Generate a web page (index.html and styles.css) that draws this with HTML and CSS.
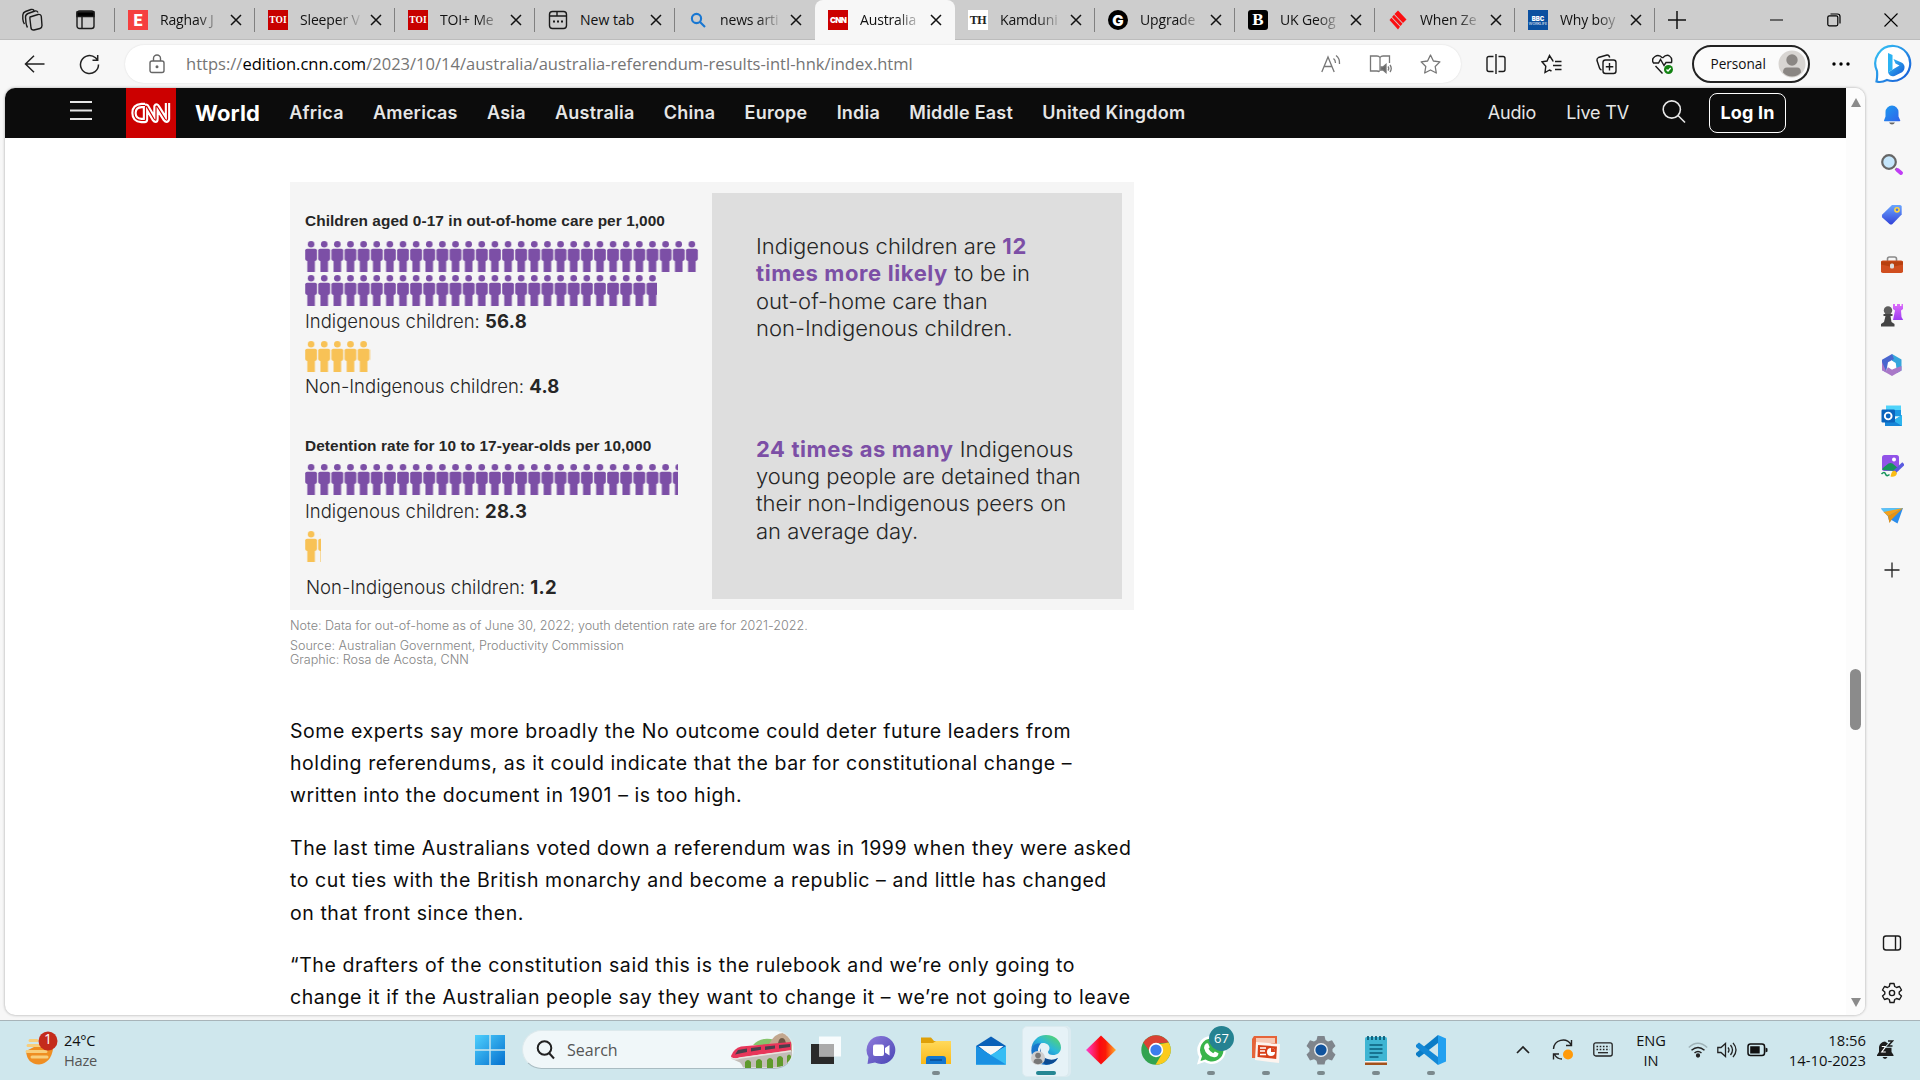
FILE: index.html
```html
<!DOCTYPE html>
<html lang="en">
<head>
<meta charset="utf-8">
<title>Australia referendum results</title>
<link rel="stylesheet" href="styles.css">
</head>
<body>
<svg class="defs" width="0" height="0">
  <defs>
    <g id="person"><circle cx="6.1" cy="3.3" r="3.3"/><rect x=".2" y="7.7" width="11.8" height="12.2" rx="1.8"/><path d="M2.3 18h7.6v13H2.3z"/></g>
    <pattern id="people-purple" width="13.13" height="31" patternUnits="userSpaceOnUse"><use href="#person" fill="#7c4fa6"/></pattern>
    <pattern id="people-yellow" width="13.13" height="31" patternUnits="userSpaceOnUse"><use href="#person" fill="#f8c256"/></pattern>
    <symbol id="x" viewBox="0 0 12 12"><path d="M1 1l10 10M11 1L1 11" stroke="#111" stroke-width="1.5" fill="none"/></symbol>
    <linearGradient id="g-blue" x1="0" y1="0" x2="1" y2="1"><stop offset="0" stop-color="#37c6f5"/><stop offset="1" stop-color="#1557d6"/></linearGradient>
    <linearGradient id="g-win" x1="0" y1="0" x2="1" y2="1"><stop offset="0" stop-color="#4fd0fd"/><stop offset="1" stop-color="#0470cf"/></linearGradient>
    <linearGradient id="g-bell" x1="0" y1="0" x2="1" y2="1"><stop offset="0" stop-color="#1c9cf0"/><stop offset="1" stop-color="#2f62ea"/></linearGradient>
    <linearGradient id="g-tag" x1="0" y1="0" x2="0" y2="1"><stop offset="0" stop-color="#6aa6ff"/><stop offset="1" stop-color="#3242d8"/></linearGradient>
    <linearGradient id="g-rook" x1="0" y1="0" x2="0" y2="1"><stop offset="0" stop-color="#dd6dfb"/><stop offset="1" stop-color="#9c3df0"/></linearGradient>
    <linearGradient id="g-chat" x1="0" y1="0" x2="1" y2="1"><stop offset="0" stop-color="#8f7bdc"/><stop offset="1" stop-color="#4a46b5"/></linearGradient>
    <linearGradient id="g-gem" x1="0" y1="0" x2="1" y2="0"><stop offset="0" stop-color="#ff3fd0"/><stop offset=".45" stop-color="#fb0a12"/><stop offset=".65" stop-color="#fb1a08"/><stop offset="1" stop-color="#ffb02a"/></linearGradient>
    <linearGradient id="g-edge" x1="0" y1="1" x2="1" y2="0"><stop offset="0" stop-color="#1466c4"/><stop offset=".5" stop-color="#2bb7dc"/><stop offset="1" stop-color="#5fdc52"/></linearGradient>
    <linearGradient id="g-folder" x1="0" y1="0" x2="0" y2="1"><stop offset="0" stop-color="#ffd95b"/><stop offset="1" stop-color="#fbb917"/></linearGradient>
  </defs>
</svg>

<div class="desktop">
  <header class="tabstrip">
    <div class="strip-tools">
      <svg width="21" height="24" viewBox="0 0 21 24" class="ln"><path d="M8 9l8-2.500q3-.5 3.300 2l.7 9q0 2.500-2 3l-6 1.500q-2.500.5-3-2L8 11.500q-.2-2 0-2.500zM5.500 19.500Q4.500 18 4 15L3.500 9Q3.500 6.500 6 5.500L13 3q2-.5 3 1.500M2.500 16Q1 14 .8 11V7Q1 4.500 3.500 3.500L9 1.500q2-.5 3 1"/></svg>
      <svg width="19" height="20" viewBox="0 0 19 20" class="ln"><rect x="1" y="1" width="17" height="17.500" rx="2.500"/><path d="M1 2h17v4.500H1z" fill="#000"/><path d="M6 6v12"/></svg>
    </div>
    <div class="tab"><span class="fav fav-e">E</span><span class="tt">Raghav J</span><svg class="x"><use href="#x"/></svg></div>
    <div class="tab"><span class="fav fav-toi">TOI</span><span class="tt">Sleeper V</span><svg class="x"><use href="#x"/></svg></div>
    <div class="tab"><span class="fav fav-toi">TOI</span><span class="tt">TOI+ Me</span><svg class="x"><use href="#x"/></svg></div>
    <div class="tab"><svg class="fav ln" viewBox="0 0 20 20"><rect x="1.500" y="1.500" width="17" height="17" rx="3"/><path d="M1.500 6h17M9 2v4"/><path d="M5 11.500h2M9 11.500h2M13 11.500h2" stroke-width="2.200"/></svg><span class="tt whole">New tab</span><svg class="x"><use href="#x"/></svg></div>
    <div class="tab flat"><svg class="fav" viewBox="0 0 20 20"><g fill="none" stroke="#1877d2" stroke-width="2.100"><circle cx="8.500" cy="8.500" r="4.600"/><path d="M12 12l5 5"/></g></svg><span class="tt">news arti</span><svg class="x"><use href="#x"/></svg></div>
    <div class="tab active"><span class="fav fav-cnn">CNN</span><span class="tt">Australia</span><svg class="x"><use href="#x"/></svg></div>
    <div class="tab"><span class="fav fav-th">TH</span><span class="tt">Kamduni</span><svg class="x"><use href="#x"/></svg></div>
    <div class="tab"><span class="fav fav-g">G</span><span class="tt">Upgrade</span><svg class="x"><use href="#x"/></svg></div>
    <div class="tab"><span class="fav fav-b">B</span><span class="tt">UK Geog</span><svg class="x"><use href="#x"/></svg></div>
    <div class="tab"><svg class="fav" viewBox="0 0 20 20"><g fill="#fb0f12"><path d="M6.500 4L10 .5l8.500 9L15 13z"/><path d="M4 7l2-2.200 8.500 9L12.500 16z"/><path d="M1.500 10l2-2.300 8.500 9L10 19.500z"/></g></svg><span class="tt">When Ze</span><svg class="x"><use href="#x"/></svg></div>
    <div class="tab"><span class="fav fav-bbc"><b>BBC</b><i>WORKLIFE</i></span><span class="tt">Why boy</span><svg class="x"><use href="#x"/></svg></div>
    <svg class="newtab" width="18" height="18" viewBox="0 0 18 18"><path d="M9 0v18M0 9h18" stroke="#111" stroke-width="1.500"/></svg>
    <div class="winbtns">
      <svg width="14" height="14" viewBox="0 0 14 14"><path d="M0 7h13" stroke="#000"/></svg>
      <svg width="14" height="14" viewBox="0 0 14 14" fill="none" stroke="#000" stroke-width="1.200"><rect x=".8" y="2.800" width="10" height="10" rx="1.500"/><path d="M3.500 1h7q2.500 0 2.500 2.500v7"/></svg>
      <svg width="14" height="14" viewBox="0 0 14 14"><path d="M.5.5l13 13M13.500.5l-13 13" stroke="#000" stroke-width="1.100"/></svg>
    </div>
  </header>

  <div class="toolbar">
    <svg class="back" width="21" height="18" viewBox="0 0 21 18"><path d="M20.500 9H1.500M10 .8L1.500 9l8.500 8.200" fill="none" stroke="#222" stroke-width="1.500"/></svg>
    <svg class="reload" width="21" height="21" viewBox="0 0 21 21"><path d="M19.500 10.500a9 9 0 1 1-3-6.700l2 2M18.700 1v5.200h-5.200" fill="none" stroke="#222" stroke-width="1.500"/></svg>
    <div class="address">
      <svg class="lock" width="16" height="20" viewBox="0 0 16 20" fill="none" stroke="#666" stroke-width="1.400"><rect x="1" y="7" width="14" height="11.500" rx="2"/><path d="M4.500 7V4.500a3.500 3.500 0 0 1 7 0V7"/><circle cx="8" cy="12.800" r=".8" fill="#666"/></svg>
      <span class="url">https://<b>edition.cnn.com</b>/2023/10/14/australia/australia-referendum-results-intl-hnk/index.html</span>
      <svg width="20" height="20" viewBox="0 0 20 20" fill="none" stroke="#777" stroke-width="1.300"><path d="M.8 18L7 3l6.200 15M3 12.500h8M12.500 4.500q2 1.500 2 4.500M15 1.500q4 3 3.500 8.500"/></svg>
      <svg width="23" height="20" viewBox="0 0 23 20" fill="none" stroke="#777" stroke-width="1.300"><path d="M11 3.500Q10 2 8 2H1.500v15H8q2 0 2.500.8M11 3.500Q12 2 14 2h6.500v7M11 3.500V17"/><path d="M12 13h2l3-2.500v8L14 16h-2z" fill="#666"/><path d="M19 12.500q1.500 2 0 4M21 11q2.500 3.500 0 7"/></svg>
      <svg width="21" height="20" viewBox="0 0 21 20" fill="none" stroke="#777" stroke-width="1.300" stroke-linejoin="round"><path d="M10.500 1l2.900 6 6.500.9-4.700 4.600 1.100 6.500-5.800-3-5.800 3 1.100-6.500L1.100 7.900l6.500-.9z"/></svg>
    </div>
    <div class="actions ln">
      <svg width="20" height="20" viewBox="0 0 20 20"><path d="M7.500 2.500H3q-2 0-2 2v11q0 2 2 2h4.500M12.500 2.500H17q2 0 2 2v11q0 2-2 2h-4.500M10 0v20"/></svg>
      <svg width="21" height="20" viewBox="0 0 21 20"><path d="M12.500 7h-.5L8.500 1.500 6 7l-5 .8 3.800 4.400L4 18.500l4.500-2.500 2 1M14 7.500h6.500M12 11.500h8.500M14 15.500h6.500"/></svg>
      <svg width="21" height="21" viewBox="0 0 21 21"><rect x="7" y="6" width="13" height="13.500" rx="2.500"/><path d="M13.500 9v7.500M9.800 12.800h7.500M5.500 16Q4 15.500 3.500 14L1 6.500Q.7 4.500 2.500 3.500L11 1q2-.3 2.700 2.500"/></svg>
      <svg width="21" height="21" viewBox="0 0 21 21"><path d="M10.500 4Q7 0 3 2.500T1.500 9h5l2-3.500 3.500 6 2-3h5.500q1-4.500-2-6.500T10.500 4M3.500 12l7 7.500"/><circle cx="16.500" cy="15.500" r="4.500" fill="#128212" stroke="none"/><path d="M14.500 15.500l1.500 1.500 2.700-3" stroke="#fff"/></svg>
    </div>
    <div class="profile">Personal<svg width="28" height="28" viewBox="0 0 28 28"><circle cx="14" cy="14" r="13.500" fill="#d8d5d2"/><circle cx="14" cy="10" r="5.700" fill="#8a8683"/><path d="M5 22.500Q5 17.500 9 17.500h10q4 0 4 5-3.500 4-9 4t-9-4z" fill="#8a8683"/></svg></div>
    <svg class="dots" width="18" height="4" viewBox="0 0 18 4"><circle cx="2" cy="2" r="1.700"/><circle cx="9" cy="2" r="1.700"/><circle cx="16" cy="2" r="1.700"/></svg>
    <svg class="bing" width="40" height="40" viewBox="0 0 40 40"><path d="M20 2a17.500 17.500 0 1 1-7 34Q7 39 2.500 37.500 3.500 33 3 27A17.500 17.500 0 0 1 20 2z" fill="#fff" stroke="url(#g-blue)" stroke-width="2.200"/><path d="M14 9l4.500 2v14.500l-4.500 3z" fill="#2bb3f3"/><path d="M14 28.500l5.500-3.500 6-3.500-4-2-2-4.500 8 3.500q3.500 2 3 5.500t-4 5l-6 3q-4 1.500-6.500-3.500z" fill="url(#g-blue)"/></svg>
  </div>

  <div class="middle">
    <main class="page">
      <nav class="site">
        <svg class="burger" width="22" height="20" viewBox="0 0 22 20"><path d="M0 1h22M0 9.500h22M0 18h22" stroke="#e6e6e6" stroke-width="1.800"/></svg>
        <div class="cnn"><svg width="40" height="22" viewBox="0 0 40 22" fill="none"><g stroke="#fff" stroke-width="5.400" stroke-linejoin="round"><path d="M14 3.500h-3.500Q3 4 3 11t7.500 7.500h3q1 0 1-1V5q0-1.500 1.200-.5L23 17q2 2.500 2 0V4.500q.5-1 1.500.5l7.500 12q2 2.500 2.500 0V1"/></g><path d="M14 3.500h-3.500Q3 4 3 11t7.500 7.500h3q1 0 1-1V5q0-1.500 1.200-.5L23 17q2 2.500 2 0V4.500q.5-1 1.500.5l7.500 12q2 2.500 2.500 0V1" stroke="#c00" stroke-width="1.200"/></svg></div>
        <div class="links"><b>World</b><a>Africa</a><a>Americas</a><a>Asia</a><a>Australia</a><a>China</a><a>Europe</a><a>India</a><a>Middle East</a><a>United Kingdom</a></div>
        <div class="right"><span>Audio</span><span>Live TV</span>
          <svg width="24" height="24" viewBox="0 0 24 24" fill="none" stroke="#e6e6e6" stroke-width="1.600"><circle cx="9.800" cy="9.500" r="8.600"/><path d="M16 15.500l7 7"/></svg>
          <span class="login">Log In</span></div>
      </nav>
      <article>
        <figure>
          <section class="stats">
            <h3>Children aged 0-17 in out-of-home care per 1,000</h3>
            <svg class="ppl first" width="395" height="31"><rect width="394" height="31" fill="url(#people-purple)"/></svg>
            <svg class="ppl" width="353" height="31"><rect width="352" height="31" fill="url(#people-purple)"/></svg>
            <p>Indigenous children: <b>56.8</b></p>
            <svg class="ppl yel" width="66" height="31"><rect width="66" height="31" fill="url(#people-yellow)"/></svg>
            <p class="non">Non-Indigenous children: <b>4.8</b></p>
            <h3 class="second">Detention rate for 10 to 17-year-olds per 10,000</h3>
            <svg class="ppl third" width="374" height="31"><rect width="373" height="31" fill="url(#people-purple)"/></svg>
            <p class="tight">Indigenous children: <b>28.3</b></p>
            <svg class="ppl one" width="17" height="31"><rect width="16" height="31" fill="url(#people-yellow)"/></svg>
            <p class="last">Non-Indigenous children: <b>1.2</b></p>
          </section>
          <section class="facts">
            <p>Indigenous children are <b>12<br>times more likely</b> to be in<br>out-of-home care than<br>non-Indigenous children.</p>
            <p><b>24 times as many</b> Indigenous<br>young people are detained than<br>their non-Indigenous peers on<br>an average day.</p>
          </section>
        </figure>
        <div class="caption"><p>Note: Data for out-of-home as of June 30, 2022; youth detention rate are for 2021-2022.</p><p>Source: Australian Government, Productivity Commission<br>Graphic: Rosa de Acosta, CNN</p></div>
        <div class="story">
          <p>Some experts say more broadly the No outcome could deter future leaders from<br>holding referendums, as it could indicate that the bar for constitutional change –<br>written into the document in 1901 – is too high.</p>
          <p>The last time Australians voted down a referendum was in 1999 when they were asked<br>to cut ties with the British monarchy and become a republic – and little has changed<br>on that front since then.</p>
          <p>“The drafters of the constitution said this is the rulebook and we’re only going to<br>change it if the Australian people say they want to change it – we’re not going to leave</p>
        </div>
      </article>
      <div class="scroll"><i class="up"></i><i class="thumb"></i><i class="down"></i></div>
    </main>
    <aside class="sidebar">
      <svg viewBox="0 0 24 24"><path d="M4 17.500l1.500-4V9a6.500 6.500 0 0 1 13 0v4.500l1.800 4q0 .7-.8.700H4.500q-.6 0-.5-.7z" fill="url(#g-bell)"/><path d="M9 19.500h6q-1 2-3 2t-3-2z" fill="#666"/></svg>
      <svg viewBox="0 0 24 24"><path d="M15.500 15.500l1 1" stroke="#777" stroke-width="2.500"/><path d="M17.500 17l3.500 3" stroke="#c03df5" stroke-width="4" stroke-linecap="round"/><circle cx="9" cy="9" r="6.800" fill="#c5e6fb" stroke="#666" stroke-width="2.200"/></svg>
      <svg viewBox="0 0 24 24"><path d="M12 2h8q1.500 0 1.700 1.500v8L12.500 21q-1.500 1.200-3 0L2.300 14.500q-1-1.500 0-3z" fill="url(#g-tag)"/><circle cx="17" cy="6.800" r="2.100" fill="#4a72e8" stroke="#ffd53e" stroke-width="1.600"/></svg>
      <svg viewBox="0 0 24 24"><path d="M7.500 8V6q0-2 2-2h5q2 0 2 2v2" fill="none" stroke="#8a8a8a" stroke-width="1.600"/><rect x="1" y="7.500" width="22" height="12.500" rx="1.800" fill="#d04e1f"/><path d="M1 8.500h22v3l-9 2h-4l-9-2z" fill="#b8400f"/><rect x="10" y="10.500" width="4" height="5" rx="1.500" fill="#ddd"/></svg>
      <svg viewBox="0 0 24 24"><path d="M13 1h2v2h2V1h3v2h1.500V1H23v5l-2 1.500.5 6.500 1.700 3H13l2-9.500L13 6z" fill="url(#g-rook)"/><circle cx="8" cy="7.500" r="4.200" fill="#5d5d5d"/><path d="M3.500 11h9v2h-2l1 6 3 2v2.500H1V21l3-2 1.500-6h-2z" fill="#444"/></svg>
      <svg viewBox="0 0 24 24"><path d="M12 1l9.500 5.500v11L17 20l-1-8.500-4-3.500z" fill="#35a6dc"/><path d="M12 1L2 6.800V17l4 2.300 2-10L14 6z" fill="#4966cf"/><path d="M2 9v8.300L12 23l9.500-5.500V13L12 16.500 8 14l-2 4z" fill="#a978c8"/><path d="M12 7.800l3.800 2.200v4.200L12 16.400l-3.800-2.200V10z" fill="#fff"/></svg>
      <svg viewBox="0 0 24 24"><path d="M6 1.500h15v11H6z" fill="#4fd3fa"/><path d="M6 6h15v6H6z" fill="#1a98e4"/><path d="M5 12l8.500 5L22 11v11H5z" fill="#1685d8"/><path d="M22 22L13 16.500l9-5.500z" fill="#2db5ee"/><rect x="1.500" y="5.500" width="13.500" height="13" rx="1.200" fill="#0a64bd"/><circle cx="8.200" cy="12" r="3.400" fill="none" stroke="#fff" stroke-width="1.900"/></svg>
      <svg viewBox="0 0 24 24"><rect x="2" y="1" width="17" height="16" rx="2.500" fill="#9152e8"/><path d="M2.500 16q-1-1 1-2.500l5-4q2-1.200 4 0l6 5q0 2.500-2.500 2.500z" fill="#16945b"/><circle cx="14" cy="5.500" r="2" fill="#fff"/><path d="M23.500 9.500L14 18.500" stroke="#5a5be0" stroke-width="3.600"/><path d="M15.500 17q-3-1-4 2l-1 3.500q5 1 6.500-3z" fill="#fabd14"/><path d="M1.500 20q3-3 4 0t4 .5" fill="none" stroke="#16945b" stroke-width="1.600"/></svg>
      <svg viewBox="0 0 24 24"><path d="M1 4.500L23 4l-5.500 15.500-6-3.500-2 2.500-1.500-6z" fill="#2b8deb"/><path d="M1 4.500L23 4 8 12z" fill="#58c4f6"/><path d="M3.500 8L23 4 8 12z" fill="#f6a11b"/><path d="M8 12L23 4 11.500 15.500 9.500 19z" fill="#e8920f"/></svg>
      <svg viewBox="0 0 24 24" class="plus"><path d="M12 4.500v15M4.500 12h15" stroke="#222" stroke-width="1.300"/></svg>
      <hr>
      <svg viewBox="0 0 24 24" class="ln panel"><rect x="3.500" y="5" width="17" height="14" rx="2.500"/><path d="M15.500 5v14"/></svg>
      <svg viewBox="0 0 24 24" class="ln gear"><path d="M10 2.500h4l.7 3 1.800 1 3-1 2 3.500-2.300 2v2l2.300 2-2 3.500-3-1-1.800 1-.7 3h-4l-.7-3-1.800-1-3 1-2-3.500 2.300-2v-2l-2.300-2 2-3.500 3 1 1.800-1z" stroke-linejoin="round"/><circle cx="12" cy="12" r="2.600"/></svg>
    </aside>
  </div>

  <footer class="taskbar">
    <div class="weather">
      <svg width="34" height="38" viewBox="0 0 34 38"><path d="M2 20q1 13 13 13.500Q27 32 29 18L14 14z" fill="#ef8e22"/><path d="M6 9.500h7M4 14.500h12M3 20.500h19M8 26h15" stroke="#f8ce7c" stroke-width="3" stroke-linecap="round"/><circle cx="24" cy="10" r="9.500" fill="#c42b1c"/></svg>
      <em class="n1">1</em>
      <div><span>24°C</span><span class="dim">Haze</span></div>
    </div>
    <svg class="win" width="30" height="30" viewBox="0 0 30 30" fill="url(#g-win)"><path d="M0 0h14.300v14.300H0zM15.700 0H30v14.300H15.700zM0 15.700h14.300V30H0zM15.700 15.700H30V30H15.700z"/></svg>
    <div class="search">
      <svg width="20" height="20" viewBox="0 0 20 20" fill="none" stroke="#222" stroke-width="2"><circle cx="8.500" cy="8" r="6.800"/><path d="M13 13l5 5.500"/></svg><span>Search</span>
      <svg class="train" width="64" height="36" viewBox="0 0 64 36"><path d="M24 13Q32 4 46 8v6z" fill="#86c46b"/><path d="M40 12Q46 1 54 1q8 2 9 12v8H42z" fill="#c2a78f"/><path d="M49 14q0-8 4-8t4 8" fill="#6b5544"/><path d="M3 27l60-8v11q-3 5-8 5.500H14q-1-3-3-5z" fill="#c3bdb8"/><path d="M16 36v-6q3-4 6 0v6zM27 36v-7q3-4 6 0v7zM38 36v-8q3-4 6 0v8zM48 35v-9q3-4 6 0v8zM58 32v-8q2-3 4 0v4z" fill="#5f9a2c"/><path d="M2 24q3-8 10-9.500L62 10v8L9 26q-7 1-7-2z" fill="#e8365a"/><path d="M9 18l9-1.500v3.500L6 22.500zM22 16l10-1.200v3L22 19.500zM36 14.500l10-1v3l-10 1.500zM50 13l11-1v3l-11 1.500z" fill="#4a3f4b"/><path d="M2 26q4 2 9 0l51-7" fill="none" stroke="#e9e3df" stroke-width="1.500"/></svg>
    </div>
    <div class="apps">
      <div><svg viewBox="0 0 30 30"><path d="M0 9h23v20H0z" fill="#2a2a2a"/><path d="M8 1.500h22v20H8z" fill="#fff" opacity=".85"/><path d="M8 9h15v12.500H8z" fill="#aaa"/></svg></div>
      <div><svg viewBox="0 0 30 30"><path d="M15 1a14 14 0 1 1-6 26.500L1.500 29 2.500 22A14 14 0 0 1 15 1z" fill="url(#g-chat)"/><rect x="7" y="9.500" width="11" height="11.500" rx="2" fill="#fff"/><path d="M19 13l4.500-3v10.500L19 17.500z" fill="#fff"/></svg></div>
      <div class="run"><svg viewBox="0 0 30 30"><path d="M0 2.500h10l3 3.500h17v6H0z" fill="#dfa008"/><path d="M0 8h12l3-2h15v23H0z" fill="url(#g-folder)"/><path d="M5 29v-5q0-3 3-3h14q3 0 3 3v5z" fill="#1377cf"/><path d="M9 25h12" stroke="#0a4f97" stroke-width="1.600"/></svg></div>
      <div><svg viewBox="0 0 30 30"><path d="M0 11L15 1.500 30 11v8H0z" fill="#0a60b8"/><path d="M2.500 11h25L15 21z" fill="#f7f7f7"/><path d="M0 11l30 18.500H0z" fill="#1e9ae8"/><path d="M30 11L12 21.500 0 29.500h30z" fill="#37bdf4"/><path d="M0 11l30 18.500H0z" fill="#1a90e2"/></svg></div>
      <div class="current"><svg viewBox="0 0 30 30"><path d="M15 0C24 0 30 6 30 12.500c0 5-4 7.500-8 7.500-3 0-5-1-5-3 0-1 1.500-1.500 1.500-4S16 8 12 8C6 8 1 12 .3 15 .5 6 7 0 15 0z" fill="url(#g-edge)"/><path d="M.3 15Q2 8 10 8q-5 6-2 12t10 6q5 0 9-3-4 7-12 7Q.5 29 .3 15z" fill="#1676cd"/><path d="M10 13q-1 8 5 10.500t12-.5q-4 7-12 6.500Q6 26 10 13z" fill="#0d4c92"/><circle cx="7" cy="23" r="7" fill="#cfcfcf"/><circle cx="7" cy="20.500" r="2.800" fill="#777"/><path d="M2.500 27.500q0-4 4.500-4t4.500 4Q7 31 2.500 27.500z" fill="#777"/></svg></div>
      <div><svg viewBox="0 0 30 30"><path d="M15 .5L30 15 15 29.500 0 15z" fill="url(#g-gem)"/></svg></div>
      <div><svg viewBox="0 0 30 30"><circle cx="15" cy="15" r="14.700" fill="#31a350"/><path d="M2.300 7.600A14.700 14.700 0 0 1 27.700 7.600L15 8.500l-5.500 9z" fill="#da4133"/><path d="M27.700 7.600A14.700 14.700 0 0 1 14.500 29.700L21.500 18 19 9z" fill="#fbcb1c"/><circle cx="15" cy="15" r="7.200" fill="#fff"/><circle cx="15" cy="15" r="5.600" fill="#3b7ded"/></svg></div>
      <div class="run"><svg viewBox="0 0 30 30"><path d="M15.500 1a14 14 0 1 1-7 26L1 29.500 3.200 22A14 14 0 0 1 15.500 1z" fill="#fff"/><path d="M15.500 3.500a11.500 11.500 0 1 1-6 21L4.500 26 6 21.300A11.500 11.500 0 0 1 15.500 3.500z" fill="#39b54a"/><path d="M10 8.500l2-.3 1.700 4-1.200 1.600q1.500 3 4.700 4.500l1.700-1.800 3.600 1.800q-.5 4.200-4.500 4-8-1.500-10-9.300 0-3 2-4.500z" fill="#fff"/></svg><em>67</em></div>
      <div class="run"><svg viewBox="0 0 30 30"><path d="M3 1h23v22H1V4z" fill="#e5643a"/><path d="M5 3h19v5H5z" fill="#f7c9b5"/><path d="M5 7l24 2-1 19L4 25z" fill="#fdf4ef"/><path d="M7 10l19 1.500-.8 12.500L6.500 22z" fill="#d8401a"/><path d="M9 13h6M9 16h5M9 19.500h6" stroke="#fff" stroke-width="1.700"/><circle cx="20" cy="17" r="4" fill="#fff"/><path d="M20 17v-4a4 4 0 0 1 4 4z" fill="#d8401a"/></svg></div>
      <div class="run"><svg viewBox="0 0 30 30"><path d="M11.500 1h7l1 4 2.500 1.500 4-1.200L29.500 11l-3 3v2.500l3 3-3.500 6-4-1.300-2.500 1.500-1 3.800h-7l-1-3.800L8 24.200l-4 1.300-3.500-6 3-3V14l-3-3L4 5.300l4 1.200L10.500 5z" fill="#7f858c"/><circle cx="15" cy="15" r="7" fill="#e9edf0"/><circle cx="15" cy="15" r="5.600" fill="#11539d"/></svg></div>
      <div class="run"><svg viewBox="0 0 30 30"><rect x="4" y="2" width="22" height="26" rx="1.500" fill="#3fb5d3"/><path d="M7 1v4M11 1v4M15 1v4M19 1v4M23 1v4" stroke="#0d5c77" stroke-width="1.800"/><path d="M8.500 10h13M8.500 14h13M8.500 18h13M8.500 22h9" stroke="#0b5d7c" stroke-width="1.700"/><path d="M4 27h22v3H4z" fill="#a3511b"/><path d="M4 26h22v1.500H4z" fill="#f4f4f4"/></svg></div>
      <div class="run"><svg viewBox="0 0 30 30"><path d="M22 0l8 3.500v23L22 30z" fill="#22a0f0"/><path d="M22 0v8L3 22.500 0 20v-2z" fill="#0b7cc6"/><path d="M22 30v-8L3 7.500 0 10v2z" fill="#1388d6"/></svg></div>
    </div>
    <div class="tray">
      <svg width="14" height="9" viewBox="0 0 14 9"><path d="M1 8l6-6 6 6" fill="none" stroke="#222" stroke-width="1.700"/></svg>
      <svg class="sync" width="22" height="22" viewBox="0 0 22 22" fill="none" stroke="#222" stroke-width="1.400"><path d="M1.500 10A9.500 9.500 0 0 1 19 5.500M19.500 1v5.500H14M10 20q-5 0-7.500-4.500M1.500 20.500V15H7"/><circle cx="16" cy="15.500" r="5" fill="#ff9a0a" stroke="none"/></svg>
      <svg class="kb" width="20" height="15" viewBox="0 0 20 15" fill="none" stroke="#222" stroke-width="1.300"><rect x=".8" y=".8" width="18.400" height="13.200" rx="2"/><path d="M3.500 4.500h13M3.500 7.500h13" stroke-dasharray="1.600 1.600" stroke-width="1.500"/><path d="M5 10.700h10"/></svg>
      <div class="lang"><span>ENG</span><span>IN</span></div>
      <svg class="wifi" width="20" height="16" viewBox="0 0 20 16" fill="none" stroke="#222" stroke-width="1.500"><path d="M.8 5.500q9-8.500 18.400 0" stroke="#9fb3b8"/><path d="M3.500 8.200q6.500-5.500 13 0M6.500 11q3.500-3 7 0"/><circle cx="10" cy="13.500" r="1.400" fill="#222"/></svg>
      <svg class="vol" width="20" height="16" viewBox="0 0 20 16" fill="none" stroke="#222" stroke-width="1.300"><path d="M.8 5.500H4L8.500 1.500v13L4 10.500H.8zM11 5.500q2 2.500 0 5M13.500 3q4 5 0 10M16 .8q6 7 0 14.400"/></svg>
      <svg class="bat" width="21" height="14" viewBox="0 0 21 14"><rect x="1" y="1" width="16.500" height="11.500" rx="2.500" fill="none" stroke="#111" stroke-width="1.500"/><path d="M3.200 3.200h9.500v7.200H3.200zM18.500 4.500l2 1v3l-2 1z" fill="#111"/></svg>
      <div class="clock"><span>18:56</span><span>14-10-2023</span></div>
      <svg class="bell" width="17" height="19" viewBox="0 0 17 19"><path d="M2 7q1-5 6-5.500L14.500 6v6l2 3v1H0v-1l2-3zM5.500 17h5l-1.500 1.800H7z" fill="#1d1d1d"/><path d="M4.800 6.500h4l-4 5.500h4" fill="none" stroke="#fff" stroke-width="1.200"/><path d="M10.500.8h5l-5 5.500h5" fill="none" stroke="#cfe7ed" stroke-width="3"/><path d="M11 1h4.500l-4.500 5h4.500" fill="none" stroke="#1d1d1d" stroke-width="1.500"/></svg>
    </div>
  </footer>
</div>
</body>
</html>
```
FILE: styles.css
```css
* { box-sizing: border-box; }
body { margin: 0; font-family: "Open Sans", "Noto Sans", sans-serif; color: #111; }
p, h3, figure { margin: 0; }
svg { display: block; flex: none; }
.defs { position: absolute; }
.ln { fill: none; stroke: #1a1a1a; stroke-width: 1.4; }
.desktop { width: 1920px; height: 1080px; overflow: hidden; display: flex; flex-direction: column; background: #f7f7f7; }

/* tab strip */
.tabstrip { height: 40px; flex: none; display: flex; background: #cdcdcd; border-bottom: 1px solid #bcbcbc; }
.strip-tools { width: 115px; display: flex; align-items: center; gap: 33px; padding-left: 22px; border-right: 1px solid #808080; height: 24px; margin-top: 8px; }
.tab { width: 140px; height: 24px; margin-top: 8px; display: flex; align-items: center; padding-left: 13px; border-right: 1px solid #808080; font-size: 14px; }
.tab.flat { border-color: transparent; }
.tab.active { background: #f7f7f7; margin-top: 0; height: 40px; border: 0; border-radius: 8px 8px 0 0; }
.fav { width: 20px; height: 20px; flex: none; display: flex; align-items: center; justify-content: center; color: #fff; }
.fav-e { background: #f53f3f; font: 900 16px "Roboto", sans-serif; }
.fav-toi { background: #c80000; font: bold 9.5px "Liberation Serif", serif; }
.fav-cnn { background: #cc0000; font: 900 8px "Inter", sans-serif; letter-spacing: -.7px; }
.fav-th { background: #fff; color: #222; font: bold 12px "Liberation Serif", serif; letter-spacing: -.5px; }
.fav-g { background: #000; border-radius: 50%; font: 900 15px "Inter", sans-serif; }
.fav-b { background: #000; border-radius: 3px; font: bold 17px "Liberation Serif", serif; }
.fav-bbc { background: #0b50a0; flex-direction: column; font: 900 6px "Inter", sans-serif; }
.fav-bbc i { font: normal 3.6px "Inter", sans-serif; }
.tt { width: 60px; margin-left: 12px; white-space: nowrap; line-height: 24px; letter-spacing: -.15px; -webkit-mask-image: linear-gradient(90deg, #000 62%, rgba(0, 0, 0, .1) 100%); mask-image: linear-gradient(90deg, #000 62%, rgba(0, 0, 0, .1) 100%); }
.tt.whole { -webkit-mask-image: none; mask-image: none; letter-spacing: 0; }
.x { width: 12px; height: 12px; margin-left: 10px; }
.newtab { margin: 11px 0 0 13px; }
.winbtns { margin-left: auto; display: flex; gap: 43px; padding: 13px 22px 0 0; }

/* toolbar */
.toolbar { height: 48px; flex: none; display: flex; align-items: center; padding: 0 6px 0 24px; }
.reload { margin-left: 34px; }
.address { width: 1336px; height: 38px; margin-left: 25px; background: #fff; border-radius: 19px; display: flex; align-items: center; padding-left: 24px; box-shadow: 0 0 2px rgba(0, 0, 0, .12); }
.url { width: 1111px; margin: -2px 24px 0 21px; font-size: 16.55px; color: #757575; white-space: nowrap; }
.url + svg { margin: 0 28px 0 0; }
.url + svg + svg { margin-right: 28px; }
.url b { font-weight: 400; color: #000; }
.actions { display: flex; gap: 34.500px; margin-left: 25px; }
.profile { width: 118px; height: 38px; margin-left: 19px; margin-top: -1px; border: 2px solid #222; border-radius: 19px; background: #fbfbfb; display: flex; align-items: center; justify-content: space-between; padding: 0 2px 0 17px; font-size: 13.6px; }
.dots { margin-left: 22px; }
.bing { margin-left: auto; }

/* page */
.middle { height: 932px; flex: none; display: flex; }
.page { position: relative; width: 1860px; height: 927px; margin-left: 5px; background: #fff; border-radius: 10px; overflow: hidden; box-shadow: 0 0 3px rgba(0, 0, 0, .35); font-family: "Inter", sans-serif; }
.site { height: 49.500px; width: 1841px; background: #0c0c0c; display: flex; align-items: center; color: #e6e6e6; font-size: 18px; }
.burger { margin-left: 65px; margin-top: -3px; }
.cnn { width: 50px; height: 49.500px; margin-left: 34px; background: #c00; display: flex; align-items: center; justify-content: center; }
.links { display: flex; align-items: center; gap: 29.200px; margin-left: 19px; font-weight: 600; letter-spacing: .24px; }
.links b { font-size: 22px; font-weight: 700; color: #fff; letter-spacing: .15px; }
.right { margin-left: auto; display: flex; align-items: center; gap: 30px; padding-right: 60px; }
.right span { letter-spacing: -.15px; }
.right svg { margin: -2px -7px 0 3px; }
.right .login { width: 77px; height: 40px; border: 1.500px solid #fff; border-radius: 8px; color: #fff; font-weight: 700; display: flex; align-items: center; justify-content: center; letter-spacing: .17px; }

.scroll { position: absolute; right: 0; top: 0; width: 19px; height: 927px; background: #fcfcfc; display: flex; flex-direction: column; align-items: center; }
.up, .down { border: 5.500px solid transparent; }
.up { margin-top: 5px; border-bottom: 9px solid #8b8b8b; }
.thumb { width: 11px; height: 61px; margin-top: 562px; border-radius: 6px; background: #8b8b8b; }
.down { margin-top: 268px; border-top: 9px solid #8b8b8b; }

/* article */
article { width: 850px; margin: 44.500px 0 0 285px; }
figure { width: 844px; height: 428px; background: #f5f5f5; display: flex; color: #262626; }
.stats { width: 422px; padding: 29px 0 0 15px; font-size: 18.5px; font-weight: 300; }
.stats h3 { font: bold 15.4px/20px "Liberation Sans", sans-serif; letter-spacing: .07px; white-space: nowrap; }
.stats p { line-height: 24px; }
.stats b { font-weight: 700; letter-spacing: .3px; }
.ppl { margin: 3px 0; }
.ppl.first { margin-top: 10px; }
.ppl.yel { margin: 8px 0 2px; }
.stats h3.second { margin-top: 38px; }
.ppl.third { margin: 8px 0 4px; }
.ppl.one { margin: 8px 0 13px; }
.stats p.last { padding-left: 1px; }
.facts { width: 410px; height: 406px; margin-top: 11px; padding: 40px 0 0 44px; background: #dedede; font-size: 22px; font-weight: 300; line-height: 27.300px; letter-spacing: 0; white-space: nowrap; }
.facts p + p { margin-top: 93.500px; }
.facts b { font-weight: 700; color: #7c4fa6; letter-spacing: .6px; }
.caption { margin-top: 9px; font-size: 12.600px; font-weight: 300; line-height: 14px; color: #858585; letter-spacing: -.01px; }
.caption p + p { margin-top: 6px; }
.story { margin-top: 47.500px; font-size: 19.500px; line-height: 32.400px; letter-spacing: .57px; color: #0c0c0c; white-space: nowrap; }
.story p + p { margin-top: 20px; }

/* edge sidebar */
.sidebar { width: 55px; display: flex; flex-direction: column; align-items: center; padding: 15px 1px 0 0; }
.sidebar svg { width: 24px; height: 24px; margin-bottom: 26.100px; }
.sidebar svg.plus { margin: 4px 0 0; }
.sidebar hr { width: 35px; height: 1px; border: 0; background: #bbb; margin: 333px 0 16px; }
.sidebar svg.panel { margin-bottom: 26px; }

/* taskbar */
.taskbar { height: 60px; display: flex; align-items: center; background: #cfe7ed; border-top: 1px solid #a8b4b9; font-size: 14.600px; line-height: 20px; padding-bottom: 2px; }
.taskbar span { display: block; }
.weather { position: relative; width: 475px; display: flex; align-items: center; padding-left: 24px; gap: 6px; letter-spacing: -.2px; }
.dim { color: #555; }
.weather em { position: absolute; left: 44px; top: -1px; color: #fff; font-style: normal; font-size: 14px; }
.search { width: 272px; height: 39px; margin-left: 17px; border-radius: 20px; background: #f0f7f9; border: 1px solid #dce9ec; border-bottom-color: #a9bcc2; display: flex; align-items: center; padding-left: 13px; font-size: 16px; color: #555; overflow: hidden; }
.search span { margin-left: 11px; }
.search .train { margin-left: auto; }
.apps { display: flex; margin-left: 4px; }
.apps div { position: relative; width: 55px; height: 57px; display: flex; align-items: center; justify-content: center; }
.apps svg { width: 30px; height: 30px; position: relative; }
.apps .run::after, .apps .current::after { content: ""; position: absolute; bottom: 3px; width: 8px; height: 4px; border-radius: 2px; background: #7b898d; }
.apps .current::after { width: 20px; left: 18px; background: #258693; }
.apps .current::before { content: ""; position: absolute; left: 4px; top: 5px; width: 45px; height: 49px; border-radius: 5px; background: #e6f2f7; border: 1px solid #dbeaef; box-shadow: 2px 0 0 #dcebf1; }
.apps em { position: absolute; left: 26px; top: 5px; width: 25px; height: 25px; border-radius: 50%; background: #258291; color: #fff; font-size: 13px; line-height: 24px; text-align: center; font-style: normal; }
.tray { margin-left: auto; display: flex; align-items: center; padding-right: 26px; }
.sync { margin-left: 22px; }
.kb { margin-left: 19px; }
.lang { width: 36px; margin-left: 20px; text-align: center; }
.wifi { margin-left: 19px; }
.vol { margin-left: 9px; }
.bat { margin-left: 10px; }
.clock { width: 84px; margin-left: 14px; text-align: right; white-space: nowrap; font-size: 14.800px; }
.bell { margin-left: 11px; }
```
